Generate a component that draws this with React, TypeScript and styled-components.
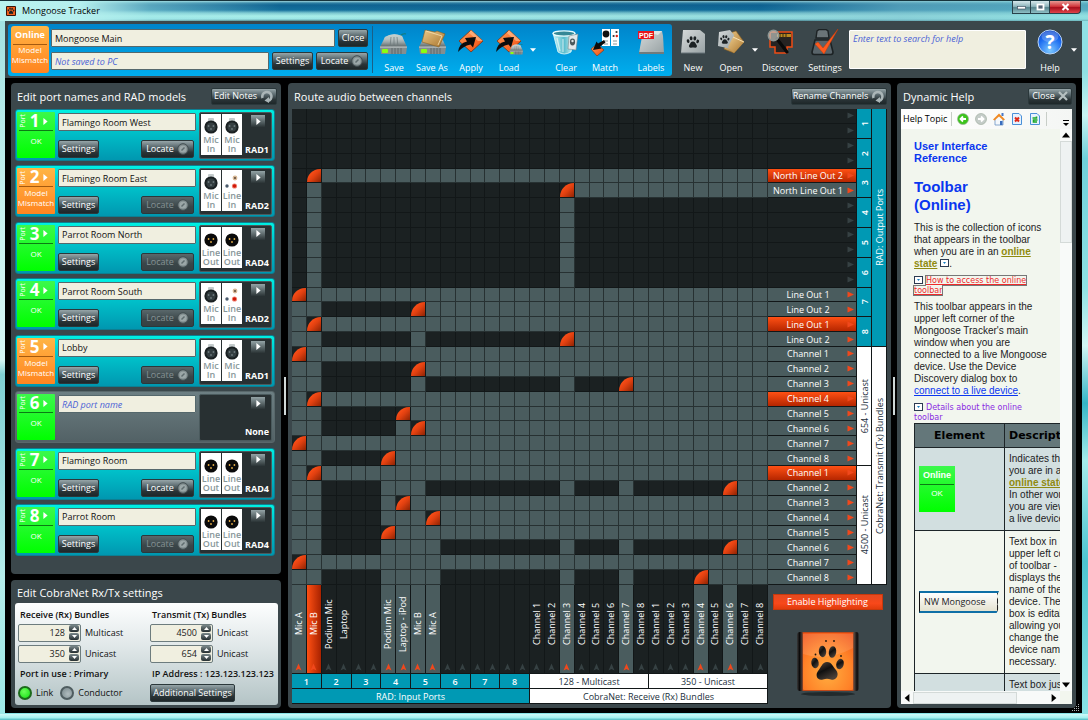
import React from 'react';
import styled, { createGlobalStyle, css } from 'styled-components';

const ui = `"Open Sans", "Noto Sans", sans-serif`;
const doc = `"Liberation Sans", Arial, sans-serif`;
const wide = `"DejaVu Sans", Verdana, sans-serif`;

const slate = '#3b474b';
const ink = '#1b2122';
const lit = '#4a5c5e';
const line = '#121718';
const teal = '#0099b4';
const cream = '#f0efe0';
const orangeFill = 'linear-gradient(#ff5014, #b52600)';

const Global = createGlobalStyle`
  * { box-sizing: border-box; }
  html, body { margin: 0; padding: 0; }
  body { font-family: ${ui}; font-size: 9px; line-height: 12px; background: #9fe6e6; }
  button, input, textarea { font: inherit; margin: 0; }
  button { cursor: pointer; }
`;

/* ---------- window ---------- */

const Window = styled.div`
  position: relative;
  display: flex;
  flex-direction: column;
  height: 100vh;
  min-height: 680px;
  min-width: 1040px;
  padding: 0 6px 7px 5px;
  background:
    linear-gradient(#d0faf8, #a4f1ef 60%, #4fb9c0) left bottom / 100% 6px no-repeat,
    linear-gradient(180deg, #9fdfe0, #c6f1ee 30%, #d6f6f4 50%, #7fcfd2 52%, #b4ecea 80%, #9be8e6) left top / 5px 100% no-repeat,
    linear-gradient(180deg, #8fe0e4 0 10%, #c9f4f2 16%, #6fd0da 22%, #8fe2e4 40%, #d2f6f4 48%, #35b5c6 56%, #a5ecec 64%, #4cc4d0 78%, #8ce4e6 100%);
  overflow: hidden;
`;

const TitleBar = styled.header`
  display: flex;
  align-items: center;
  flex: none;
  height: 21px;
  margin: 0 -6px 0 -5px;
  padding-left: 6px;
  border-top: 1px solid #17343c;
  background:
    linear-gradient(90deg, #b9f2ef 0, #b5efee 80px, rgba(160, 230, 232, 0.5) 150px, rgba(10, 100, 150, 0) 280px,
      rgba(0, 70, 130, 0.1) 760px, rgba(120, 190, 205, 0.6) 900px, rgba(130, 215, 220, 0.6) 100%),
    linear-gradient(#9fd6dc 0, #2f80a4 2px, #0f6391 4px, #14709c 9px, #7cc8d0 12px, #a9efe9 15px, #9be6e6 18px, #4c8288 20px);
  color: #000;
`;

const Title = styled.h1`
  flex: 1;
  margin: 0 0 0 6px;
  font-size: 9px;
  font-weight: 400;
`;

const WindowButtons = styled.div`
  display: flex;
  align-self: flex-start;
  margin-right: 7px;
`;

const WindowButton = styled.button<{ $w: number; $red?: boolean }>`
  display: flex;
  align-items: center;
  justify-content: center;
  width: ${p => p.$w}px;
  height: 13px;
  padding: 0;
  border: 1px solid #28414a;
  border-top: 0;
  background: ${p =>
    p.$red ? 'linear-gradient(#e79a94, #d2373c 45%, #a80f1c 55%, #e0434a)' : 'linear-gradient(#d6e8ec, #8fb6bd 45%, #56848d 55%, #8fc0c6)'};
  border-radius: ${p => (p.$red ? '0 0 4px 0' : 0)};
  & + & { border-left-width: 0; }
`;

/* ---------- toolbar ---------- */

const Toolbar = styled.div`
  display: flex;
  flex: none;
  height: 57px;
  padding: 3px 3px 2px;
  background: ${slate};
`;

const Connected = styled.div`
  display: flex;
  flex: none;
  padding: 2px 2px 3px 3px;
  border-radius: 3px;
  background: linear-gradient(#0084ca, #00aeee);
`;

const Connection = styled.div`
  display: grid;
  grid-template-columns: 38px 317px;
  column-gap: 2px;
  width: 362px;
  padding-right: 4px;
  border-right: 1px solid #1a5f87;
`;

const State = styled.div<{ $warn?: boolean }>`
  display: flex;
  flex-direction: column;
  align-items: center;
  width: 38px;
  height: 47px;
  border-radius: 3px;
  background: ${p => (p.$warn ? 'linear-gradient(#ffb545, #ff8420)' : 'linear-gradient(#3cf84c, #00ff00)')};
  color: #fff;
  font-size: 8px;
  line-height: 10px;
  text-align: center;
`;

const StateTitle = styled.div<{ $warn?: boolean }>`
  width: 34px;
  height: 19px;
  border-bottom: 1px solid ${p => (p.$warn ? '#a35a10' : '#0b7a14')};
  font-size: 9px;
  font-weight: 700;
  line-height: 18px;
`;

const OkText = styled.div`
  padding-top: 4px;
`;

const Fields = styled.div`
  display: flex;
  flex-direction: column;
  gap: 5px;
  padding-top: 3px;
`;

const FieldRow = styled.div`
  display: flex;
  gap: 3px;
`;

const field = css`
  min-width: 0;
  border: 1px solid #55686c;
  border-radius: 1px;
  background: ${cream};
  color: #111;
  outline: 0;
  &::placeholder { color: #4a62d6; font-style: italic; opacity: 1; }
`;

const TextField = styled.input`
  ${field}
  flex: 1;
  height: 18px;
  padding: 0 3px;
`;

const Search = styled.textarea`
  ${field}
  flex: 1;
  height: 39px;
  margin: 6px 3px 0 5px;
  padding: 2px 3px;
  border-color: #fff;
  resize: none;
`;

const GlossButton = styled.button<{ $w?: number }>`
  display: inline-flex;
  align-items: center;
  justify-content: center;
  gap: 3px;
  flex: none;
  width: ${p => (p.$w ? p.$w + 'px' : 'auto')};
  height: 18px;
  padding: 0 1px;
  border: 1px solid #2b383b;
  border-radius: 2px;
  background: linear-gradient(#97a6a9, #56656a 40%, #2a3437 70%, #1e2729);
  color: #fff;
  white-space: nowrap;
  svg { flex: none; }
  &:disabled { color: #869294; background: linear-gradient(#5a686b, #3a4649 60%, #364144); cursor: default; }
`;

const HeadButton = styled(GlossButton)`
  height: 17px;
`;

const Tools = styled.div`
  display: flex;
  flex: none;
  padding-left: 2px;
`;

const ToolButton = styled.button<{ $ml?: number }>`
  display: flex;
  flex-direction: column;
  align-items: center;
  width: 38px;
  height: 47px;
  margin-left: ${p => p.$ml ?? 0}px;
  padding: 3px 0 0;
  border: 0;
  background: none;
  color: #fff;
  white-space: nowrap;
  svg { display: block; flex: none; }
  span { margin-top: 6px; }
`;

const DropButton = styled.button`
  width: 10px;
  height: 47px;
  padding: 0;
  border: 0;
  background: none;
`;

const PlainTools = styled(Tools)`
  padding-top: 2px;
`;

/* ---------- panels ---------- */

const Body = styled.main`
  display: grid;
  grid-template-columns: 270px 7px minmax(0, 1fr) 6px 179px;
  flex: 1;
  min-height: 0;
  padding: 5px 6px;
  background: #000;
`;

const Column = styled.div`
  display: flex;
  flex-direction: column;
  gap: 6px;
  min-height: 0;
`;

const Panel = styled.section<{ $grow?: boolean }>`
  display: flex;
  flex-direction: column;
  flex: ${p => (p.$grow ? 1 : 'none')};
  min-height: 0;
  padding: 0 4px 4px;
  border-radius: 4px;
  background: ${slate};
`;

const PanelHead = styled.div`
  display: flex;
  align-items: center;
  justify-content: space-between;
  flex: none;
  height: 26px;
  padding: 0 0 0 2px;
`;

const CobraPanel = styled(Panel)`
  padding-bottom: 3px;
`;

const CobraHead = styled(PanelHead)`
  height: 23px;
`;

const Heading = styled.h2`
  margin: 2px 0 0;
  color: #fff;
  font-size: 11px;
  line-height: 16px;
  font-weight: 400;
  white-space: nowrap;
`;

const Splitter = styled.div`
  align-self: center;
  justify-self: center;
  width: 2px;
  height: 38px;
  background: #cfd8d8;
`;

/* ---------- ports ---------- */

const PortList = styled.ul`
  display: flex;
  flex-direction: column;
  justify-content: space-between;
  flex: 1;
  margin: 0;
  padding: 0 2px 14px 0;
  list-style: none;
`;

const PortCard = styled.li<{ $empty?: boolean }>`
  display: grid;
  grid-template-columns: 38px 138px 73px;
  column-gap: 3px;
  height: 52px;
  padding: 2px 1px;
  border: 1px solid ${p => (p.$empty ? '#59686b' : '#0c7f92')};
  border-radius: 3px;
  background: ${p => (p.$empty ? 'linear-gradient(#6d7f83, #526165)' : 'linear-gradient(#00f0e2, #00c3cb 40%, #0097b0)')};
`;

const PortState = styled(State)`
  height: 46px;
  border-radius: 1px;
`;

const PortNumber = styled.div<{ $warn?: boolean }>`
  display: flex;
  align-items: center;
  justify-content: space-between;
  flex: none;
  width: 34px;
  height: 19px;
  padding: 0 4px 0 0;
  border-bottom: 1px solid ${p => (p.$warn ? '#a35a10' : '#0b7a14')};
  margin-bottom: 1px;
  b { font-size: 17px; line-height: 18px; }
`;

const Upright = styled.span`
  writing-mode: vertical-rl;
  transform: rotate(180deg);
  font-size: 7px;
  line-height: 8px;
`;

const PortForm = styled.div`
  display: flex;
  flex-direction: column;
  justify-content: space-between;
  padding: 1px 0;
`;

const TextFieldRow = styled.div`
  display: flex;
`;

const PortActions = styled.div`
  display: flex;
  justify-content: space-between;
  padding-right: 2px;
`;

const Model = styled.div`
  display: flex;
  height: 47px;
  padding: 1px 2px 3px 1px;
  border: 1px solid #4a5a5d;
  border-radius: 2px;
  background: #283032;
  gap: 1px;
`;

const Socket = styled.div`
  display: flex;
  flex-direction: column;
  align-items: center;
  width: 20px;
  background: #fff;
  color: #87979a;
  font-size: 9px;
  line-height: 9px;
  font-weight: 600;
  text-align: center;
  svg { display: block; margin: 2px 0 1px; }
`;

const ModelInfo = styled.div`
  display: flex;
  flex: 1;
  flex-direction: column;
  align-items: flex-end;
  justify-content: space-between;
  padding-top: 1px;
  color: #fff;
  b { line-height: 11px; white-space: nowrap; }
`;

const ModelButton = styled.button`
  display: flex;
  align-items: center;
  justify-content: center;
  width: 14px;
  height: 12px;
  margin-right: 4px;
  padding: 0;
  border: 0;
  background: linear-gradient(#93a3a6, #2b3436);
`;

/* ---------- CobraNet ---------- */

const Cobra = styled.div`
  display: grid;
  grid-template-columns: 132px 1fr;
  height: 102px;
  margin-right: -1px;
  padding: 4px 0 0 3px;
  border-radius: 3px;
  background: linear-gradient(#fdfefe, #e2e9ea 40%, #b4c4c6);
  color: #111;
`;

const CobraSide = styled.div`
  display: grid;
  grid-template-rows: 15px 21px 21px 19px 20px;
  align-content: start;
  align-items: center;
  min-width: 0;
`;

const Strong = styled.div`
  padding-left: 2px;
  font-weight: 600;
  white-space: nowrap;
`;

const SpinRow = styled.div`
  display: flex;
  align-items: center;
  gap: 4px;
  height: 18px;
`;

const Spin = styled.span`
  display: flex;
  align-items: center;
  width: 63px;
  height: 18px;
  border: 1px solid #6d7c7e;
  border-radius: 2px;
  background: ${cream};
  input { flex: 1; min-width: 0; height: 16px; padding: 0 4px 0 0; border: 0; background: none; text-align: right; color: #222; outline: 0; }
`;

const SpinButtons = styled.span`
  display: flex;
  flex-direction: column;
  gap: 1px;
  width: 10px;
  margin-right: 1px;
  button { display: flex; align-items: center; justify-content: center; height: 7px; padding: 0; border: 0; border-radius: 2px; background: linear-gradient(#7a888a, #262f31); }
`;

const Lamps = styled.div`
  display: flex;
  align-items: center;
  gap: 4px;
  height: 18px;
  span { margin-right: 3px; }
`;

const Lamp = styled.i<{ $on?: boolean }>`
  width: 14px;
  height: 14px;
  border: 2px solid ${p => (p.$on ? '#1c6a1c' : '#4f5d60')};
  border-radius: 50%;
  background: ${p => (p.$on ? 'radial-gradient(circle at 40% 35%, #6cff5a, #10e010)' : 'radial-gradient(circle at 60% 60%, #b0bcbe, #76868a)')};
`;

/* ---------- routing matrix ---------- */

const Routing = styled.div`
  display: grid;
  grid-template-columns: minmax(0, 1fr) 89px 15px 15px;
  grid-template-rows: minmax(0, 1fr) 89px 15px 15px;
  flex: 1;
  min-height: 0;
`;

const across = 'repeat(32, minmax(0, 1fr))';

const Matrix = styled.div`
  display: grid;
  grid-template-columns: ${across};
  grid-template-rows: ${across};
  background: ${ink};
`;

const Cell = styled.div<{ $lit: boolean }>`
  border-right: 1px solid ${p => (p.$lit ? '#273132' : line)};
  border-bottom: 1px solid ${p => (p.$lit ? '#273132' : line)};
  background: ${p => (p.$lit ? lit : ink)};
`;

const RouteCell = styled(Cell)`
  display: flex;
  background: ${ink};
`;

const Route = styled.button`
  flex: 1;
  padding: 0;
  border: 0;
  border-radius: 100% 0 0 0;
  background: linear-gradient(135deg, #ff5018 25%, #e04010 55%, #8e2404);
`;

const RowLabels = styled.div`
  display: grid;
  grid-template-rows: ${across};
`;

type Tone = 'hot' | 'lit' | 'off';

const RowLabel = styled.div<{ $tone: Tone }>`
  display: flex;
  align-items: center;
  padding: 0 2px 0 1px;
  border-right: 1px solid ${line};
  border-bottom: 1px solid ${line};
  background: ${p => (p.$tone === 'hot' ? orangeFill : p.$tone === 'lit' ? lit : ink)};
  color: #fff;
  line-height: 13px;
  text-align: center;
  white-space: nowrap;
  span { flex: 1; }
`;

const ColumnLabels = styled.div`
  display: grid;
  grid-template-columns: ${across};
`;

const ColumnLabel = styled.div<{ $tone: Tone }>`
  display: flex;
  flex-direction: column;
  align-items: center;
  padding: 0 0 2px;
  border-right: 1px solid ${line};
  border-bottom: 1px solid ${line};
  background: ${p => (p.$tone === 'hot' ? 'linear-gradient(90deg, #ff5014, #a82200)' : p.$tone === 'lit' ? lit : ink)};
  color: #fff;
  white-space: nowrap;
`;

const UprightName = styled.span`
  flex: 1;
  writing-mode: vertical-rl;
  transform: rotate(180deg);
  text-align: center;
  line-height: 12px;
`;

const GroupRow = styled.div`
  grid-column: 1;
  display: grid;
  grid-template-columns: ${across};
`;

const GroupColumn = styled.div`
  display: grid;
  grid-template-rows: ${across};
`;

const Group = styled.div<{ $n: number; $white?: boolean }>`
  display: flex;
  align-items: center;
  justify-content: center;
  min-width: 0;
  min-height: 0;
  border-right: 1px solid ${line};
  border-bottom: 1px solid ${line};
  background: ${p => (p.$white ? '#fff' : teal)};
  color: ${p => (p.$white ? '#23303c' : '#fff')};
  line-height: 13px;
  white-space: nowrap;
  ${GroupRow} > & { grid-column: span ${p => p.$n}; }
  ${GroupColumn} > & { grid-row: span ${p => p.$n}; }
`;

const GroupNumber = styled.b`
  font-weight: 600;
`;

const SideName = styled.span`
  writing-mode: vertical-rl;
  transform: rotate(180deg);
`;

const SideNumber = styled(SideName)`
  font-weight: 600;
`;

const Corner = styled.div`
  grid-column: 2 / 5;
  grid-row: 2 / 5;
  display: flex;
  flex-direction: column;
  align-items: center;
  gap: 22px;
  padding-top: 9px;
`;

const Highlight = styled.button`
  width: 110px;
  height: 16px;
  padding: 0 0 1px;
  border: 1px solid #c8380c;
  background: linear-gradient(#e64a20, #f8481a 60%, #e03c0c);
  color: #fff;
`;

/* ---------- help ---------- */

const HelpBox = styled.div`
  display: flex;
  flex-direction: column;
  flex: 1;
  min-height: 0;
  background: #f2f6ee;
`;

const HelpBar = styled.div`
  display: flex;
  align-items: center;
  flex: none;
  height: 20px;
  padding: 0 0 0 2px;
  background: linear-gradient(90deg, #fff, #f4f6f4);
  gap: 4px;
`;

const HelpTopic = styled.span`
  width: 44px;
  white-space: nowrap;
`;

const Rule = styled.i`
  width: 1px;
  height: 14px;
  background: #c8cec8;
`;

const IconButton = styled.button`
  width: 14px;
  height: 14px;
  padding: 0;
  border: 0;
  background: none;
  svg { display: block; }
`;

const OverflowButton = styled(IconButton)`
  width: 10px;
  margin: 8px 0 0 auto;
`;

const HelpView = styled.div`
  display: grid;
  grid-template-columns: minmax(0, 1fr) 12px;
  grid-template-rows: minmax(0, 1fr) 13px;
  flex: 1;
  min-height: 0;
`;

const Article = styled.article`
  overflow: hidden;
  padding: 11px 0 0 13px;
  color: #1c1c24;
  font-family: ${doc};
  font-size: 10px;
  line-height: 12px;
  p { width: 134px; margin: 0 0 6px; }
`;

const Crumb = styled.h3`
  margin: 0 0 14px;
  color: #0a37f0;
  font-size: 11px;
  line-height: 12px;
`;

const Topic = styled.h4`
  margin: 0 0 8px;
  color: #0a37f0;
  font-size: 15px;
  line-height: 18px;
`;

const Olive = styled.a`
  color: #8f8a10;
  font-weight: 700;
`;

const Blue = styled.a`
  color: #0a37f0;
`;

const Toggle = styled.div`
  width: 134px;
  margin: 0 0 5px;
  font-family: ${wide};
  font-size: 8px;
  line-height: 10px;
  svg { vertical-align: -1px; margin-right: 3px; }
`;

const ToggleLink = styled.a<{ $focus?: boolean }>`
  color: ${p => (p.$focus ? '#ef2b2b' : '#8a2be2')};
  text-decoration: ${p => (p.$focus ? 'underline' : 'none')};
  outline: ${p => (p.$focus ? '1px solid #777' : 'none')};
`;

const Elements = styled.table`
  width: 180px;
  margin-top: -5px;
  border-collapse: collapse;
  table-layout: fixed;
  white-space: nowrap;
  th { height: 24px; padding: 0 4px; border: 1px solid #1d2528; background: #64777a; color: #000; font-family: ${wide}; font-size: 11px; }
  th + th { text-align: left; }
  td { padding: 5px 4px; border: 1px solid #1d2528; overflow: hidden; }
  tbody tr:nth-child(odd) td { background: #d2dfe0; }
`;

const OnlineSample = styled(State)`
  width: 36px;
  height: 46px;
  border-radius: 0;
`;

const NameSample = styled.div`
  width: 80px;
  height: 22px;
  padding: 3px 4px;
  border: solid #0f6fa6;
  border-width: 2px 0 2px 1px;
  border-left-color: #111;
  clip-path: polygon(0 0, 100% 0, 97% 25%, 100% 45%, 98% 60%, 100% 75%, 97% 100%, 0 100%);
  background: linear-gradient(90deg, transparent 77px, #222 77px 78px, transparent 78px), linear-gradient(#fff, #e4e2d0);
  font-family: ${ui};
  font-size: 9px;
`;

const Scroller = styled.div<{ $row?: boolean }>`
  display: flex;
  flex-direction: ${p => (p.$row ? 'row' : 'column')};
  align-items: center;
  background: #f8faf9;
  svg { flex: none; margin: ${p => (p.$row ? '0 2px' : '2px 0')}; }
`;

const Thumb = styled.div<{ $row?: boolean }>`
  flex: none;
  width: ${p => (p.$row ? '104px' : '12px')};
  height: ${p => (p.$row ? '12px' : '102px')};
  border: 1px solid #d4dad8;
  background: #eef2f2;
`;

const Grow = styled.i`
  flex: 1;
`;

const Grip = styled.div`
  position: absolute;
  right: 8px;
  bottom: 8px;
  svg { display: block; }
`;

/* ---------- drawings ---------- */

const Tri = ({ d, s = 6, c = '#fff' }: { d: 'up' | 'down' | 'left' | 'right'; s?: number; c?: string }) => {
  const pts = { right: '2,0 8,5 2,10', left: '8,0 2,5 8,10', up: '0,8 5,2 10,8', down: '0,2 10,2 5,8' }[d];
  return (
    <svg width={s} height={s} viewBox="0 0 10 10"><polygon points={pts} fill={c} /></svg>
  );
};

const RowArrow = ({ c }: { c: string }) => (
  <svg width="7" height="7" viewBox="0 0 7 7"><path d="M0.500 0.500 L7 3.500 L0.500 6.500 Z" fill={c} /></svg>
);

const ColumnArrow = ({ c }: { c: string }) => (
  <svg width="7" height="8" viewBox="0 0 7 8"><path d="M3.500 0.500 L6.500 7.500 L3.500 6 L0.500 7.500 Z" fill={c} /></svg>
);

const HiddenSvg = styled.svg`
  position: absolute;
`;

const Defs = () => (
  <HiddenSvg width="0" height="0" aria-hidden="true">
    <defs>
      <linearGradient id="metal" x1="0" y1="0" x2="0" y2="1"><stop offset="0" stopColor="#e8ecec" /><stop offset="0.6" stopColor="#9fa9aa" /><stop offset="1" stopColor="#5c6667" /></linearGradient>
      <linearGradient id="page" x1="0" y1="0" x2="1" y2="1"><stop offset="0" stopColor="#d6dada" /><stop offset="1" stopColor="#98a2a4" /></linearGradient>
      <linearGradient id="fire" x1="0" y1="0" x2="1" y2="1"><stop offset="0" stopColor="#ffa25c" /><stop offset="1" stopColor="#f2480c" /></linearGradient>
      <linearGradient id="folder" x1="0" y1="0" x2="1" y2="1"><stop offset="0" stopColor="#ecca8a" /><stop offset="1" stopColor="#a8742c" /></linearGradient>
      <radialGradient id="ball" cx="0.5" cy="0.85" r="0.9"><stop offset="0" stopColor="#7cc8ff" /><stop offset="0.6" stopColor="#1c6cf0" /><stop offset="1" stopColor="#0a3cc0" /></radialGradient>
      <linearGradient id="glass" x1="0" y1="0" x2="1" y2="0"><stop offset="0" stopColor="#c8f4f8" /><stop offset="0.5" stopColor="#58bccc" /><stop offset="1" stopColor="#e4fafa" /></linearGradient>
      <radialGradient id="ember" cx="0.5" cy="0.7" r="0.8"><stop offset="0" stopColor="#ffae40" /><stop offset="0.6" stopColor="#ff8228" /><stop offset="1" stopColor="#f2581c" /></radialGradient>
      <linearGradient id="edge" x1="0" y1="0" x2="1" y2="0"><stop offset="0" stopColor="#3a3a3a" /><stop offset="0.04" stopColor="#0c0a0a" /><stop offset="0.08" stopColor="#4a3a34" /><stop offset="0.1" stopColor="#c04818" /><stop offset="0.9" stopColor="#c04818" /><stop offset="0.92" stopColor="#5a4a42" /><stop offset="0.97" stopColor="#0c0a0a" /><stop offset="1" stopColor="#3a3a3a" /></linearGradient>
      <linearGradient id="pad" x1="0" y1="0" x2="0.6" y2="1"><stop offset="0" stopColor="#5c4c40" /><stop offset="0.5" stopColor="#101010" /><stop offset="1" stopColor="#4a4038" /></linearGradient>
    </defs>
  </HiddenSvg>
);

const Drive = () => (
  <g>
    <path d="M21 7 Q24 4 27 5" fill="none" stroke="#147a78" strokeWidth="1.2" />
    <path d="M6 8 Q14 3 23 7 L28 18 H1 Z" fill="url(#metal)" />
    <path d="M6 8 Q14 3 23 7 L24 10 H5 Z" fill="#b8c4c2" opacity="0.7" />
    <path d="M12 8 L11 18 M15 8 V18 M18 8 L19 18" stroke="#6c7778" strokeWidth="0.7" />
    <path d="M1 18 H28 L27 25 H2 Z" fill="#848e90" />
    <path d="M1 18 H28" stroke="#dfe5e5" strokeWidth="0.8" />
    <path d="M13 19 V25 M16 19 V25 M19 19 V25 M22 19 V25" stroke="#5b6566" strokeWidth="0.9" />
    <rect x="3" y="20" width="6" height="4" rx="1" fill="#8bff10" />
  </g>
);

const Diamond = () => (
  <g>
    <path d="M15 1 L27 12 L15 23 L3 12 Z" fill="url(#fire)" stroke="#7b3412" strokeWidth="0.8" />
    <path d="M15 1 L27 12 L22 12 L13 4 Z" fill="#ffc49a" opacity="0.6" />
    <path d="M2 23 Q3 14 11 12.500 L9 9 L20 8 L17 18.500 L14.500 15.500 Q7 17 2 23 Z" fill="#0c0c0c" />
  </g>
);

const Paw = ({ x = 0, y = 0, k = 1, fill = '#1c2224' }: { x?: number; y?: number; k?: number; fill?: string }) => (
  <g transform={`translate(${x} ${y}) scale(${k})`} fill={fill}>
    <ellipse cx="2" cy="6.4" rx="1.7" ry="2.3" transform="rotate(-15 2 6.4)" />
    <ellipse cx="5.8" cy="2.8" rx="1.8" ry="2.6" transform="rotate(-8 5.8 2.8)" />
    <ellipse cx="10.4" cy="2.9" rx="1.8" ry="2.6" transform="rotate(8 10.4 2.9)" />
    <ellipse cx="14" cy="6.8" rx="1.7" ry="2.3" transform="rotate(18 14 6.8)" />
    <path d="M8 7 C10.6 7 11 9.4 12.4 10.8 C14 12.6 12.6 15 10.6 14.6 C9 14.3 7.4 14.3 5.8 14.6 C3.6 15 2.2 13 3.6 11 C4.8 9.4 5.4 7 8 7 Z" />
  </g>
);

const Icon = ({ children }: { children: React.ReactNode }) => (
  <svg width="30" height="27" viewBox="0 0 30 27">{children}</svg>
);

const icons: Record<string, React.ReactNode> = {
  Save: <Drive />,
  'Save As': (
    <g>
      <g transform="translate(1 0)"><Drive /></g>
      <path d="M8 1 L18 3 L20 2 L28 5 L22 18 L5 13 Z" fill="url(#folder)" stroke="#8a6020" strokeWidth="0.6" />
      <path d="M9 2 L25 7 L21 16" fill="none" stroke="#f8e2b4" strokeWidth="0.8" />
    </g>
  ),
  Apply: <Diamond />,
  Load: (
    <g>
      <Diamond />
      <g transform="translate(15 13) scale(0.5)"><Drive /></g>
    </g>
  ),
  Clear: (
    <g>
      <path d="M2 4 H24 L20 23 Q13 27 7 23 Z" fill="url(#glass)" stroke="#e6fbfb" strokeWidth="0.8" />
      <ellipse cx="13" cy="4.5" rx="11" ry="2.6" fill="#358796" stroke="#e9fcfc" strokeWidth="1.4" />
      <path d="M6 9 L9 22 M12 10 V23" stroke="#fff" strokeWidth="1.2" opacity="0.6" />
      <path d="M18 7 L27 5 L25 21 L17 20 Z" fill="#e3e9ea" stroke="#788" strokeWidth="0.6" />
      <ellipse cx="21.5" cy="13" rx="2.6" ry="3.4" fill="#49585b" />
      <circle cx="21.5" cy="12" r="1.2" fill="#dfe6e6" />
    </g>
  ),
  Match: (
    <g>
      <rect x="12" y="0" width="8" height="17" fill="#fff" />
      <rect x="21" y="0" width="8" height="17" fill="#fff" />
      <circle cx="16" cy="5" r="3.4" fill="#111" />
      <circle cx="26.5" cy="3" r="1.1" fill="#333" /><circle cx="23.6" cy="7" r="1.1" fill="#333" /><circle cx="26.8" cy="7" r="1.2" fill="#e02010" />
      <path d="M14 12 h4 M14 15 h4 M23 12 h4 M23 15 h4" stroke="#8b9799" strokeWidth="1.2" />
      <path d="M7 15 L14 21 L7 27 L1 20 Z" fill="url(#fire)" stroke="#7b3412" strokeWidth="0.6" />
      <path d="M14 11 L8 14.500 L6.500 12.500 L3 21 L11.500 19.500 L10 17.500 L15.500 13.500 Z" fill="#0c0c0c" />
    </g>
  ),
  Labels: (
    <g>
      <path d="M7 2 H26 L27 7 L28 24 H3 Z" fill="url(#page)" />
      <path d="M7 2 H26 L22 6 Z" fill="#eef1f1" opacity="0.7" />
      <path d="M3 23 H28 V25 H3 Z" fill="#6f7b7d" />
      <rect x="2" y="2" width="16" height="8" fill="#e8151b" />
      <text x="3" y="8.6" fontFamily="Liberation Sans" fontWeight="700" fontSize="7" fill="#fff">PDF</text>
    </g>
  ),
  New: (
    <g>
      <path d="M5 1 H22 L27 5 L27 24 H3 Z" fill="url(#page)" />
      <path d="M3 24 H27" stroke="#69757a" />
      <Paw x={8.500} y={7} k={0.800} />
    </g>
  ),
  Open: (
    <g>
      <path d="M14 4 L20 2 L28 13 L18 24 L8 20 Z" fill="url(#folder)" stroke="#8a6020" strokeWidth="0.6" />
      <path d="M3 3 L14 1 L18 6 L15 20 L2 17 Z" fill="url(#page)" />
      <Paw x={4} y={6} k={0.600} />
      <path d="M17 8 L28 13 L18 24 L12 18 Z" fill="url(#folder)" />
      <path d="M17 8 L28 13" stroke="#f8e2b4" />
    </g>
  ),
  Discover: (
    <g>
      <path d="M5 3 H27 V18 H22 V24 H10 V18 H5 Z" fill="#262322" stroke="#f04c14" strokeWidth="1.5" />
      <path d="M12 5 H26 V8 H12 Z" fill="#b98a20" />
      <path d="M15 4 V9 M18 4 V9 M21 4 V9" stroke="#3a2c10" />
      <path d="M12 10 L22 23" stroke="#0a0a0a" strokeWidth="3.2" strokeLinecap="round" />
      <circle cx="8.500" cy="6.500" r="5.200" fill="#c9cfcb" fillOpacity="0.65" stroke="#8d9694" strokeWidth="1.500" />
    </g>
  ),
  Settings: (
    <g>
      <path d="M7 2 L9 0.500 H16 L18 2 L19 9 H6 Z" fill="#6a7478" stroke="#1c2224" strokeWidth="1.4" />
      <path d="M5 11 H20 L23 23 Q23 25.500 21 25.500 H4 Q2 25.500 2 23 Z" fill="#59646a" stroke="#1c2224" strokeWidth="1.6" />
      <path d="M5 15 L8 13 L13 19 L28 0 L14 25 Z" fill="#ff5a1e" stroke="#c83a08" strokeWidth="0.5" />
    </g>
  ),
  Help: (
    <g>
      <circle cx="15" cy="13" r="12" fill="url(#ball)" stroke="#b9d4f4" strokeWidth="1" />
      <ellipse cx="15" cy="7.500" rx="8.500" ry="5.500" fill="#fff" opacity="0.22" />
      <text x="15" y="20" textAnchor="middle" fontFamily="Open Sans" fontWeight="700" fontSize="19" fill="#fff">?</text>
    </g>
  ),
};

const Tool = ({ name, ml }: { name: string; ml?: number }) => (
  <ToolButton type="button" $ml={ml}>
    <Icon>{icons[name]}</Icon>
    <span>{name}</span>
  </ToolButton>
);

const Drop = ({ name }: { name: string }) => (
  <DropButton type="button" aria-label={name}><Tri d="down" /></DropButton>
);

const Knob = () => (
  <svg width="12" height="12" viewBox="0 0 12 12">
    <circle cx="6" cy="6" r="5.300" fill="#7d898b" stroke="#414d50" />
    <circle cx="6" cy="6" r="3.600" fill="#9ba7a8" />
    <path d="M4.500 7.500 L7.500 4.500" stroke="#5f6c6e" strokeWidth="1.400" />
  </svg>
);

const Turn = () => (
  <svg width="14" height="13" viewBox="0 0 14 13">
    <path d="M2.500 8 A4.600 4.600 0 1 1 8 11" fill="none" stroke="#aab5b7" strokeWidth="2.600" />
    <path d="M9 7 V13 L4.500 10.500 Z" fill="#aab5b7" />
  </svg>
);

const Cross = () => (
  <svg width="10" height="10" viewBox="0 0 10 10">
    <path d="M1 1 L9 9 M9 1 L1 9" stroke="#b6c0c1" strokeWidth="2.200" />
  </svg>
);

const Xlr = ({ kind }: { kind: string }) => {
  if (kind === 'Line In')
    return (
      <svg width="16" height="18" viewBox="0 0 16 18">
        <circle cx="11" cy="6" r="2.400" fill="#d8b896" /><circle cx="11" cy="6" r="1" fill="#5a4636" />
        <circle cx="3" cy="14" r="1.700" fill="#4a5a6c" />
        <circle cx="10.500" cy="14" r="2.600" fill="#f08070" /><circle cx="10.500" cy="14" r="1.700" fill="#d01808" />
      </svg>
    );
  const out = kind === 'Line Out';
  const pin = out ? '#e8b04a' : '#6d797c';
  return (
    <svg width="16" height="18" viewBox="0 0 16 18">
      {!out && <rect x="5" y="2" width="6" height="4" rx="1" fill="#c5cccd" />}
      <circle cx="8" cy="11" r="6.600" fill={out ? '#0a0a0a' : '#1a2022'} />
      {!out && <circle cx="8" cy="11" r="4.600" fill="#343e41" />}
      <circle cx="5.600" cy="10" r="0.900" fill={pin} /><circle cx="10.400" cy="10" r="0.900" fill={pin} /><circle cx="8" cy="13" r="0.900" fill={pin} />
    </svg>
  );
};

const Box = () => (
  <svg width="9" height="8" viewBox="0 0 9 8">
    <rect x="0.500" y="0.500" width="8" height="7" fill="#fff" stroke="#2b3a50" />
    <path d="M3 3 H6 L4.500 5 Z" fill="#1780c0" />
  </svg>
);

const Round = ({ fill, left }: { fill: string; left?: boolean }) => (
  <svg width="14" height="14" viewBox="0 0 14 14">
    <circle cx="7" cy="7" r="5.500" fill={fill} stroke="#98a898" strokeWidth="0.600" />
    <path d={left ? 'M10 7 H5 M7 4.500 L4.500 7 L7 9.500' : 'M4 7 H9 M7 4.500 L9.500 7 L7 9.500'} fill="none" stroke="#fff" strokeWidth="1.800" />
  </svg>
);

const Leaf = ({ children }: { children: React.ReactNode }) => (
  <svg width="14" height="14" viewBox="0 0 14 14">
    <path d="M2.500 1.500 H9 L11.500 4 V12.500 H2.500 Z" fill="#e6f2ff" stroke="#4a90d8" />
    {children}
  </svg>
);

/* ---------- data ---------- */

interface Port { name?: string; warn?: boolean; sockets: string[]; model: string; locate?: boolean }

const ports: Port[] = [
  { name: 'Flamingo Room West', sockets: ['Mic In', 'Mic In'], model: 'RAD1', locate: true },
  { name: 'Flamingo Room East', warn: true, sockets: ['Mic In', 'Line In'], model: 'RAD2' },
  { name: 'Parrot Room North', sockets: ['Line Out', 'Line Out'], model: 'RAD4' },
  { name: 'Parrot Room South', sockets: ['Mic In', 'Line In'], model: 'RAD2' },
  { name: 'Lobby', warn: true, sockets: ['Mic In', 'Mic In'], model: 'RAD1' },
  { sockets: [], model: 'None' },
  { name: 'Flamingo Room', sockets: ['Line Out', 'Line Out'], model: 'RAD4', locate: true },
  { name: 'Parrot Room', sockets: ['Line Out', 'Line Out'], model: 'RAD4' },
];

const indices = Array.from({ length: 32 }, (_, i) => i);
const channels = Array.from({ length: 8 }, (_, i) => `Channel ${i + 1}`);
const blank = (n: number) => Array<string>(n).fill('');
const rads = ['1', '2', '3', '4', '5', '6', '7', '8'];

/* column of the source routed to each output row */
const sourceOf: Record<number, number> = {
  4: 1, 5: 18, 12: 0, 13: 8, 14: 1, 15: 18, 16: 0, 17: 8, 18: 22, 19: 1, 20: 7, 21: 8, 22: 0, 23: 6,
  24: 1, 25: 29, 26: 7, 27: 9, 28: 6, 29: 29, 30: 0, 31: 27,
};
const firstRow: Record<number, number> = {};
Object.entries(sourceOf).forEach(([r, c]) => {
  if (firstRow[c] === undefined || Number(r) < firstRow[c]) firstRow[c] = Number(r);
});

const outputs = [
  ...blank(4), 'North Line Out 2', 'North Line Out 1', ...blank(6),
  'Line Out 1', 'Line Out 2', 'Line Out 1', 'Line Out 2', ...channels, ...channels,
];
const inputs = [
  'Mic A', 'Mic B', 'Podium Mic', 'Laptop', '', '', 'Podium Mic', 'Laptop - iPod', 'Mic B', 'Mic A',
  ...blank(6), ...channels, ...channels,
];
const selected = 1;

const isLit = (r: number, c: number) =>
  (sourceOf[r] !== undefined && c > sourceOf[r]) || (firstRow[c] !== undefined && r > firstRow[c]);
const arrowColour = (t: Tone) => (t === 'off' ? '#364143' : '#f0481c');
const rowTone = (r: number): Tone => (sourceOf[r] === undefined ? 'off' : sourceOf[r] === selected ? 'hot' : 'lit');
const columnTone = (c: number): Tone => (c === selected ? 'hot' : firstRow[c] === undefined ? 'off' : 'lit');

/* ---------- parts ---------- */

const PortItem = ({ port, n }: { port: Port; n: number }) => (
  <PortCard $empty={!port.name}>
    <PortState $warn={port.warn}>
      <PortNumber $warn={port.warn}>
        <Upright>Port</Upright>
        <b>{n}</b>
        <Tri d="right" s={7} />
      </PortNumber>
      {port.warn ? <>Model<br />Mismatch</> : <OkText>OK</OkText>}
    </PortState>
    <PortForm>
      <TextFieldRow><TextField aria-label={`Port ${n} name`} defaultValue={port.name} placeholder="RAD port name" /></TextFieldRow>
      {port.name && (
        <PortActions>
          <GlossButton type="button" $w={41}>Settings</GlossButton>
          <GlossButton type="button" $w={53} disabled={!port.locate}>Locate <Knob /></GlossButton>
        </PortActions>
      )}
    </PortForm>
    <Model>
      {port.sockets.map((s, i) => (
        <Socket key={i}>
          <Xlr kind={s} />
          {s.split(' ')[0]}<br />{s.split(' ')[1]}
        </Socket>
      ))}
      <ModelInfo>
        <ModelButton type="button" aria-label={`Port ${n} model`}><Tri d="right" s={7} /></ModelButton>
        <b>{port.model}</b>
      </ModelInfo>
    </Model>
  </PortCard>
);

const Bundle = ({ value, label, id }: { value: string; label: string; id: string }) => (
  <SpinRow>
    <Spin>
      <input id={id} defaultValue={value} />
      <SpinButtons>
        <button type="button" aria-label="Increase"><Tri d="up" s={5} /></button>
        <button type="button" aria-label="Decrease"><Tri d="down" s={5} /></button>
      </SpinButtons>
    </Spin>
    <label htmlFor={id}>{label}</label>
  </SpinRow>
);

export default function App() {
  return (
    <Window>
      <Global />
      <Defs />
      <TitleBar>
        <svg width="10" height="10" viewBox="0 0 10 10">
          <rect width="10" height="10" rx="1" fill="#3a1408" /><rect x="1" y="1" width="8" height="8" fill="#f2601c" />
          <Paw x={1.500} y={1.500} k={0.440} />
        </svg>
        <Title>Mongoose Tracker</Title>
        <WindowButtons>
          <WindowButton type="button" aria-label="Minimize" $w={19}><svg width="9" height="5"><rect x="0.500" y="1.500" width="8" height="2.500" fill="#fff" stroke="#345" strokeWidth="0.600" /></svg></WindowButton>
          <WindowButton type="button" aria-label="Maximize" $w={19}><svg width="9" height="8"><rect x="1.500" y="1.500" width="6" height="5" fill="#567" stroke="#fff" strokeWidth="1.800" /></svg></WindowButton>
          <WindowButton type="button" aria-label="Close window" $w={31} $red><svg width="9" height="8"><path d="M1.500 1 L7.500 7 M7.500 1 L1.500 7" stroke="#fff" strokeWidth="2" /></svg></WindowButton>
        </WindowButtons>
      </TitleBar>

      <Toolbar>
        <Connected>
          <Connection>
            <State $warn><StateTitle $warn>Online</StateTitle>Model<br />Mismatch</State>
            <Fields>
              <FieldRow>
                <TextField aria-label="Device name" defaultValue="Mongoose Main" />
                <GlossButton type="button" $w={30}>Close</GlossButton>
              </FieldRow>
              <FieldRow>
                <TextField aria-label="File" placeholder="Not saved to PC" />
                <GlossButton type="button" $w={41}>Settings</GlossButton>
                <GlossButton type="button" $w={52}>Locate <Knob /></GlossButton>
              </FieldRow>
            </Fields>
          </Connection>
          <Tools>
            <Tool name="Save" />
            <Tool name="Save As" />
            <Tool name="Apply" ml={1} />
            <Tool name="Load" />
            <Drop name="Load options" />
            <Tool name="Clear" ml={9} />
            <Tool name="Match" ml={1} />
            <Tool name="Labels" ml={8} />
          </Tools>
        </Connected>
        <PlainTools>
          <Tool name="New" />
          <Tool name="Open" />
          <Drop name="Open options" />
          <Tool name="Discover" ml={1} />
          <Tool name="Settings" ml={7} />
        </PlainTools>
        <Search aria-label="Search help" placeholder="Enter text to search for help" />
        <PlainTools>
          <Tool name="Help" />
          <Drop name="Help options" />
        </PlainTools>
      </Toolbar>

      <Body>
        <Column>
          <Panel $grow>
            <PanelHead>
              <Heading>Edit port names and RAD models</Heading>
              <HeadButton type="button" $w={66}>Edit Notes <Turn /></HeadButton>
            </PanelHead>
            <PortList>
              {ports.map((p, i) => <PortItem key={i} port={p} n={i + 1} />)}
            </PortList>
          </Panel>
          <CobraPanel>
            <CobraHead><Heading>Edit CobraNet Rx/Tx settings</Heading></CobraHead>
            <Cobra>
              <CobraSide>
                <Strong>Receive (Rx) Bundles</Strong>
                <Bundle id="rx1" value="128" label="Multicast" />
                <Bundle id="rx2" value="350" label="Unicast" />
                <Strong>Port in use : Primary</Strong>
                <Lamps><Lamp $on /><span>Link</span><Lamp /><span>Conductor</span></Lamps>
              </CobraSide>
              <CobraSide>
                <Strong>Transmit (Tx) Bundles</Strong>
                <Bundle id="tx1" value="4500" label="Unicast" />
                <Bundle id="tx2" value="654" label="Unicast" />
                <Strong>IP Address : 123.123.123.123</Strong>
                <Lamps><GlossButton type="button" $w={85}>Additional Settings</GlossButton></Lamps>
              </CobraSide>
            </Cobra>
          </CobraPanel>
        </Column>
        <Splitter />

        <Panel>
          <PanelHead>
            <Heading>Route audio between channels</Heading>
            <HeadButton type="button" $w={96}>Rename Channels <Turn /></HeadButton>
          </PanelHead>
          <Routing>
            <Matrix>
              {indices.map(r =>
                indices.map(c =>
                  sourceOf[r] === c ? (
                    <RouteCell key={`${r}-${c}`} $lit={false}><Route type="button" aria-label={`${inputs[c]} to ${outputs[r]}`} /></RouteCell>
                  ) : (
                    <Cell key={`${r}-${c}`} $lit={isLit(r, c)} />
                  ),
                ),
              )}
            </Matrix>
            <RowLabels>
              {outputs.map((name, r) => (
                <RowLabel key={r} $tone={rowTone(r)}><span>{name}</span><RowArrow c={arrowColour(rowTone(r))} /></RowLabel>
              ))}
            </RowLabels>
            <GroupColumn>
              {rads.map(n => <Group key={n} $n={2}><SideNumber>{n}</SideNumber></Group>)}
              <Group $n={8} $white><SideName>654 - Unicast</SideName></Group>
              <Group $n={8} $white><SideName>4500 - Unicast</SideName></Group>
            </GroupColumn>
            <GroupColumn>
              <Group $n={16}><SideName>RAD: Output Ports</SideName></Group>
              <Group $n={16} $white><SideName>CobraNet: Transmit (Tx) Bundles</SideName></Group>
            </GroupColumn>
            <ColumnLabels>
              {inputs.map((name, c) => (
                <ColumnLabel key={c} $tone={columnTone(c)}><UprightName>{name}</UprightName><ColumnArrow c={arrowColour(columnTone(c))} /></ColumnLabel>
              ))}
            </ColumnLabels>
            <Corner>
              <Highlight type="button">Enable Highlighting</Highlight>
              <svg width="62" height="66" viewBox="0 0 62 66">
                <rect width="62" height="59" rx="3" fill="url(#edge)" />
                <rect x="6" y="1" width="50" height="57" rx="1" fill="url(#ember)" />
                <path d="M6 2 H56 V16 Q30 30 6 22 Z" fill="#fff" opacity="0.120" />
                <ellipse cx="31" cy="62" rx="27" ry="2" fill="#222a2c" />
                <g fill="url(#pad)">
                  <ellipse cx="18" cy="31" rx="3.700" ry="5.300" transform="rotate(-8 18 31)" />
                  <ellipse cx="25.500" cy="19.500" rx="3.700" ry="5.800" transform="rotate(-5 25.500 19.500)" />
                  <ellipse cx="35.500" cy="20" rx="3.700" ry="5.800" transform="rotate(8 35.500 20)" />
                  <ellipse cx="43" cy="32" rx="3.700" ry="5.300" transform="rotate(15 43 32)" />
                  <path d="M30 30 C35 30 36 35 39 38 C43 43 39 49 34 47.500 C31 46.500 29 46.500 26 47.500 C20 49 18 43 21 39 C24 36 25 30 30 30 Z" />
                </g>
                <g fill="#1c120c"><circle cx="18.500" cy="22.500" r="0.900" /><circle cx="29" cy="9" r="0.900" /><circle cx="37" cy="9" r="0.900" /><circle cx="44" cy="24" r="0.900" /></g>
              </svg>
            </Corner>
            <GroupRow>
              {rads.map(n => <Group key={n} $n={2}><GroupNumber>{n}</GroupNumber></Group>)}
              <Group $n={8} $white>128 - Multicast</Group>
              <Group $n={8} $white>350 - Unicast</Group>
            </GroupRow>
            <GroupRow>
              <Group $n={16}>RAD: Input Ports</Group>
              <Group $n={16} $white>CobraNet: Receive (Rx) Bundles</Group>
            </GroupRow>
          </Routing>
        </Panel>
        <Splitter />

        <Panel>
          <PanelHead>
            <Heading>Dynamic Help</Heading>
            <HeadButton type="button" $w={44}>Close <Cross /></HeadButton>
          </PanelHead>
          <HelpBox>
            <HelpBar>
              <HelpTopic>Help Topic</HelpTopic>
              <Rule />
              <IconButton type="button" aria-label="Back"><Round fill="#3cc41c" left /></IconButton>
              <IconButton type="button" aria-label="Forward"><Round fill="#c4ccc8" /></IconButton>
              <IconButton type="button" aria-label="Home">
                <svg width="14" height="14" viewBox="0 0 14 14">
                  <path d="M3 7 V13 H11 V7 L7 3 Z" fill="#f4f8fc" stroke="#6a92c4" strokeWidth="0.800" />
                  <path d="M1 7.500 L7 1.500 L13 7.500 L11.500 8.500 L7 4.500 L2.500 8.500 Z" fill="#f08a24" />
                  <rect x="8" y="9" width="2.500" height="4" fill="#3a6ec0" /><rect x="9.500" y="1" width="2" height="3" fill="#4878c8" />
                </svg>
              </IconButton>
              <IconButton type="button" aria-label="Stop"><Leaf><path d="M5 5.500 L9 9.500 M9 5.500 L5 9.500" stroke="#e02818" strokeWidth="2" /></Leaf></IconButton>
              <IconButton type="button" aria-label="Refresh"><Leaf><path d="M4.500 6 H8.500 V4.500 M9.500 8 H5.500 V10 H9" fill="none" stroke="#1ca828" strokeWidth="1.600" /></Leaf></IconButton>
              <Rule />
              <OverflowButton type="button" aria-label="More"><svg width="8" height="10" viewBox="0 0 8 10"><path d="M1 2.500 H7" stroke="#000" strokeWidth="1" /><path d="M1 5 H7 L4 8 Z" /></svg></OverflowButton>
            </HelpBar>
            <HelpView>
              <Article>
                <Crumb>User Interface<br />Reference</Crumb>
                <Topic>Toolbar<br />(Online)</Topic>
                <p>This is the collection of icons that appears in the toolbar when you are in an <Olive href="#online">online state</Olive> <Box />.</p>
                <Toggle><Box /><ToggleLink $focus href="#access">How to access the online toolbar</ToggleLink></Toggle>
                <p>This toolbar appears in the upper left corner of the Mongoose Tracker's main window when you are connected to a live Mongoose device. Use the Device Discovery dialog box to <Blue href="#connect">connect to a live device</Blue>.</p>
                <Toggle><Box /><ToggleLink href="#details">Details about the online toolbar</ToggleLink></Toggle>
                <Elements>
                  <colgroup><col width="90" /><col width="90" /></colgroup>
                  <thead><tr><th>Element</th><th>Description</th></tr></thead>
                  <tbody>
                    <tr>
                      <td><OnlineSample><StateTitle>Online</StateTitle><OkText>OK</OkText></OnlineSample></td>
                      <td>Indicates that<br />you are in an<br /><Olive href="#state">online state</Olive>.<br />In other words,<br />you are viewing<br />a live device.</td>
                    </tr>
                    <tr>
                      <td><NameSample>NW Mongoose</NameSample></td>
                      <td>Text box in<br />upper left corner<br />of toolbar -<br />displays the<br />name of the<br />device. The text<br />box is editable,<br />allowing you to<br />change the<br />device name if<br />necessary.</td>
                    </tr>
                    <tr>
                      <td />
                      <td>Text box just<br />below the device<br />name</td>
                    </tr>
                  </tbody>
                </Elements>
              </Article>
              <Scroller><Tri d="up" s={8} c="#000" /><Thumb /><Grow /><Tri d="down" s={8} c="#000" /></Scroller>
              <Scroller $row><Tri d="left" s={8} c="#000" /><Thumb $row /><Grow /><Tri d="right" s={8} c="#000" /></Scroller>
            </HelpView>
          </HelpBox>
        </Panel>
      </Body>
      <Grip>
        <svg width="9" height="9" viewBox="0 0 9 9" fill="#aab4b4">
          <path d="M7 1h1v1h-1zM5 3h1v1h-1zM7 3h1v1h-1zM3 5h1v1h-1zM5 5h1v1h-1zM7 5h1v1h-1zM1 7h1v1h-1zM3 7h1v1h-1zM5 7h1v1h-1zM7 7h1v1h-1z" />
        </svg>
      </Grip>
    </Window>
  );
}
